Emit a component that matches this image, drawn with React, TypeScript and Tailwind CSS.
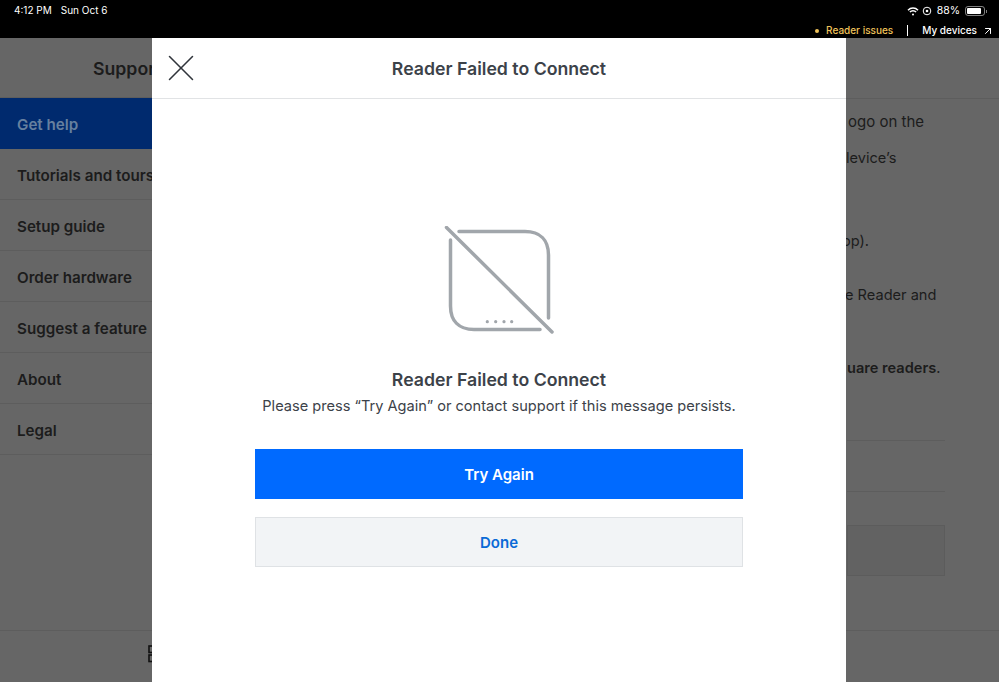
import { ArrowUpRight, X } from "lucide-react";

const NAV_ITEMS = [
  "Tutorials and tours",
  "Setup guide",
  "Order hardware",
  "Suggest a feature",
  "About",
  "Legal",
];

const FRAGMENTS = [
  { text: "ogo on the", className: "ml-[1px] h-[36px] text-[15px]" },
  { text: "levice’s", className: "ml-[-1px] h-[83px]" },
  { text: "op).", className: "ml-[-5px] h-[54px]" },
  { text: "e Reader and", className: "ml-[-2px] h-[73px]" },
];

function StatusIcons() {
  return (
    <div className="mr-[-1px] flex items-center pt-px text-[10.5px] leading-none text-white">
      <svg width="12" height="9" viewBox="0 0 12 9" fill="none" stroke="white" strokeWidth="1.5" className="mr-[3px]">
        <path d="M1 3.2a7 7 0 0 1 10 0" />
        <path d="M2.9 5.1a4.2 4.2 0 0 1 6.2 0" />
        <circle cx="6" cy="7.4" r="1" fill="white" stroke="none" />
      </svg>
      <svg width="10" height="10" viewBox="0 0 10 10" fill="none" stroke="white" strokeWidth="1" className="mr-[5px]">
        <circle cx="5" cy="5" r="3.8" />
        <circle cx="5" cy="5" r="1.3" fill="white" stroke="none" />
      </svg>
      <span className="mr-[5px]">88%</span>
      <div className="flex items-center gap-px">
        <div className="h-[10px] w-[20px] rounded-[3px] border border-white/50 p-px">
          <div className="h-full w-[85%] rounded-[1px] bg-white" />
        </div>
        <div className="h-[3px] w-px bg-white/50" />
      </div>
    </div>
  );
}

function ReaderOffIcon() {
  return (
    <svg width="110" height="110" viewBox="0 0 110 110" fill="none" className="block">
      <path
        d="M15 5.5H81C96 5.5 104.5 14 104.5 29V92M96 103.5H30C15 103.5 6.5 95 6.5 80V14"
        stroke="#a1a6ab"
        strokeWidth="3.5"
        strokeLinecap="round"
      />
      <path d="M2.5 1.5L108 106" stroke="#a1a6ab" strokeWidth="3.5" strokeLinecap="round" />
      <g fill="#a1a6ab">
        <circle cx="43.3" cy="95.7" r="1.6" />
        <circle cx="51.7" cy="95.7" r="1.6" />
        <circle cx="60" cy="95.7" r="1.6" />
        <circle cx="67.7" cy="95.7" r="1.6" />
      </g>
    </svg>
  );
}

function FailedModal() {
  return (
    <div className="absolute bottom-0 left-[152px] top-[38px] w-[694px] bg-white text-[#3c4249]">
      <div className="relative flex h-[61px] items-center justify-center border-b border-[#e1e3e5] pt-[2px]">
        <X size={46} strokeWidth={0.8} className="absolute left-[6px] top-[7px] text-[#30353b]" />
        <h2 className="text-[17.7px] font-semibold">Reader Failed to Connect</h2>
      </div>
      <div className="flex flex-col items-center px-[103px] pt-[127px]">
        <ReaderOffIcon />
        <h3 className="mt-[32px] text-[17.7px] font-semibold leading-[24px]">Reader Failed to Connect</h3>
        <p className="mt-[2px] text-[14.6px] leading-[24px]">
          Please press “Try Again” or contact support if this message persists.
        </p>
        <button className="mt-[31px] flex h-[50px] w-full items-center justify-center bg-[#006aff] pt-[2px] text-[15px] font-semibold text-white">
          Try Again
        </button>
        <button className="mt-[18px] flex h-[50px] w-full items-center justify-center border border-[#dfe2e5] bg-[#f2f4f6] pt-[2px] text-[15px] font-semibold text-[#0a6ad6]">
          Done
        </button>
      </div>
    </div>
  );
}

export default function App() {
  return (
    <div className="relative flex h-[682px] w-[999px] flex-col overflow-hidden bg-[#666666] font-['Inter',sans-serif] text-[#1c1c1c]">
      <div className="h-[38px] shrink-0 bg-black pl-[14px] pr-[13px] pt-[4px] text-white">
        <div className="flex items-center justify-between">
          <div className="flex gap-[9px] text-[10px] leading-[13px]">
            <span>4:12 PM</span>
            <span>Sun Oct 6</span>
          </div>
          <StatusIcons />
        </div>
        <div className="mr-[-8px] mt-[7px] flex items-center justify-end text-[10px] font-medium leading-[13px]">
          <span className="mr-[7px] h-[4px] w-[4px] rounded-full bg-[#f0c35a]" />
          <span className="text-[#f0c35a]">Reader issues</span>
          <span className="mx-[14px] h-[11px] w-px bg-white" />
          <span>My devices</span>
          <ArrowUpRight size={12} className="ml-[5px]" />
        </div>
      </div>

      <div className="flex min-h-0 flex-1">
        <div className="w-[300px] shrink-0 border-r border-[#5d5d5d]">
          <div className="flex h-[60px] items-center border-b border-[#5d5d5d] pl-[93px] pt-[3px] text-[17.7px] font-semibold">
            Support
          </div>
          <div className="flex h-[51px] items-center bg-[#002a6e] pl-[17px] pt-[3px] text-[15.2px] font-semibold text-[#66809f]">
            Get help
          </div>
          {NAV_ITEMS.map((item) => (
            <div
              key={item}
              className="flex h-[51px] items-center border-b border-[#5d5d5d] pl-[17px] pt-[4px] text-[15.2px] font-semibold"
            >
              {item}
            </div>
          ))}
        </div>

        <div className="flex min-w-0 flex-1 flex-col">
          <div className="h-[61px] shrink-0 border-b border-[#5d5d5d]" />
          <div className="pl-[547px] pr-[54px] pt-[10px] text-[14.6px] leading-[26px] text-[#1c1c1c]">
            {FRAGMENTS.map((line) => (
              <div key={line.text} className={line.className}>
                {line.text}
              </div>
            ))}
            <div className="h-[73px] font-semibold">
              uare readers<span className="font-normal">.</span>
            </div>
            <div className="h-[13px] border-b border-[#5d5d5d]" />
            <div className="h-[51px] border-b border-[#5d5d5d]" />
            <div className="mt-[33px] h-[51px] border border-[#5c5c5c] bg-[#626262]" />
          </div>
        </div>
      </div>

      <div className="absolute bottom-0 left-0 right-0 flex h-[52px] border-t border-[#5d5d5d] pl-[148px] pt-[14px]">
        <svg width="16" height="18" viewBox="0 0 16 18" fill="none" stroke="#111111" strokeWidth="1.6">
          <rect x="1" y="1" width="6" height="6.5" />
          <rect x="1" y="10" width="6" height="6.5" />
        </svg>
      </div>

      <FailedModal />
    </div>
  );
}
